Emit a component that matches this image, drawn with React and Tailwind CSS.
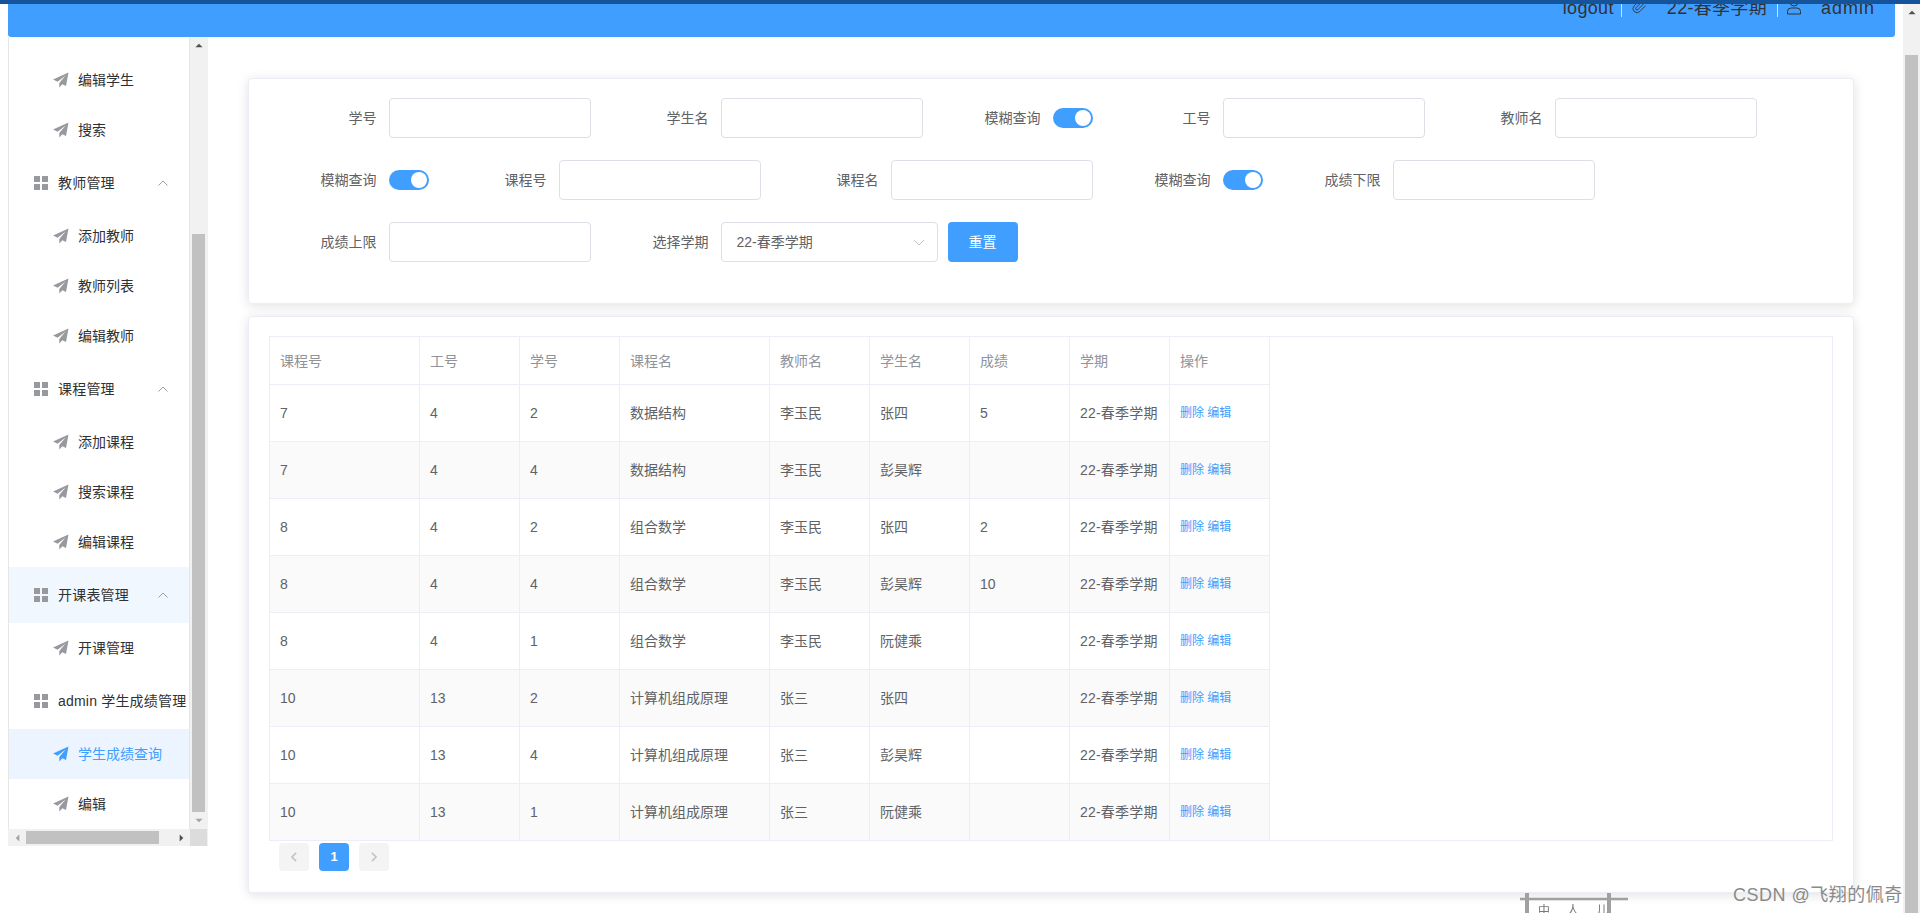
import { Paperclip } from 'lucide-react'

// Sidebar entries top to bottom; the menu is scrolled so it starts on 编辑学生.
const MENU = [
  { type: 'sub', label: '编辑学生' },
  { type: 'sub', label: '搜索' },
  { type: 'title', label: '教师管理', arrow: true },
  { type: 'sub', label: '添加教师' },
  { type: 'sub', label: '教师列表' },
  { type: 'sub', label: '编辑教师' },
  { type: 'title', label: '课程管理', arrow: true },
  { type: 'sub', label: '添加课程' },
  { type: 'sub', label: '搜索课程' },
  { type: 'sub', label: '编辑课程' },
  { type: 'title', label: '开课表管理', arrow: true, hover: true },
  { type: 'sub', label: '开课管理' },
  { type: 'title', label: 'admin 学生成绩管理' },
  { type: 'sub', label: '学生成绩查询', active: true },
  { type: 'sub', label: '编辑' },
]

const COLUMNS = ['课程号', '工号', '学号', '课程名', '教师名', '学生名', '成绩', '学期', '操作']

const ROWS = [
  ['7', '4', '2', '数据结构', '李玉民', '张四', '5'],
  ['7', '4', '4', '数据结构', '李玉民', '彭昊辉', ''],
  ['8', '4', '2', '组合数学', '李玉民', '张四', '2'],
  ['8', '4', '4', '组合数学', '李玉民', '彭昊辉', '10'],
  ['8', '4', '1', '组合数学', '李玉民', '阮健乘', ''],
  ['10', '13', '2', '计算机组成原理', '张三', '张四', ''],
  ['10', '13', '4', '计算机组成原理', '张三', '彭昊辉', ''],
  ['10', '13', '1', '计算机组成原理', '张三', '阮健乘', ''],
]

function PlaneIcon({ className }) {
  return (
    <svg viewBox="0 0 16 16" className={`h-4 w-4 shrink-0 ${className}`} fill="currentColor">
      <path d="M15.5.5 0 7.6l4.6 2.1 8-6.2-6.3 7.4v4.6l3.1-3.3 3.6 1.8z" />
    </svg>
  )
}

function GridIcon() {
  return (
    <svg viewBox="0 0 14 14" className="h-[14px] w-[14px] shrink-0 text-[#97999e]" fill="currentColor">
      <rect x="0" y="0" width="6" height="6" />
      <rect x="8" y="0" width="6" height="6" />
      <rect x="0" y="8" width="6" height="6" />
      <rect x="8" y="8" width="6" height="6" />
    </svg>
  )
}

function Arrow({ dir, className }) {
  const points = {
    up: '0,6 5,1 10,6',
    down: '0,1 5,6 10,1',
    left: '6,0 1,5 6,10',
    right: '1,0 6,5 1,10',
  }
  return (
    <svg viewBox={dir === 'up' || dir === 'down' ? '0 0 10 7' : '0 0 7 10'} className={className} fill="currentColor">
      <polygon points={points[dir]} />
    </svg>
  )
}

function Sidebar() {
  return (
    <aside className="flex h-[809px] w-[200px] shrink-0 flex-col">
      <div className="flex min-h-0 flex-1">
        <nav className="h-full w-[182px] overflow-hidden border-x border-[#e6e6e6] bg-white pt-[18px] text-sm text-[#303133]">
          {MENU.map((item) =>
            item.type === 'title' ? (
              <div
                key={item.label}
                className={`flex h-[56px] items-center gap-[10px] whitespace-nowrap pl-[25px] ${item.hover ? 'bg-[#f0f7ff]' : ''}`}
              >
                <GridIcon />
                <span className="tracking-[0.2px]">{item.label}</span>
                {item.arrow && (
                  <svg viewBox="0 0 10 6" className="ml-auto mr-[21px] h-[6px] w-[10px] text-[#909399]" fill="none" stroke="currentColor" strokeWidth="0.9">
                    <path d="M0.5 5.5 5 1l4.5 4.5" />
                  </svg>
                )}
              </div>
            ) : (
              <div
                key={item.label}
                className={`flex h-[50px] items-center gap-[9px] pl-[44px] ${item.active ? 'bg-[#ecf5ff] text-[#409eff]' : ''}`}
              >
                <PlaneIcon className={item.active ? 'text-[#409eff]' : 'text-[#97999e]'} />
                <span>{item.label}</span>
              </div>
            ),
          )}
        </nav>
        <div className="flex w-[18px] flex-col items-center bg-[#f1f1f1] pr-px">
          <div className="flex h-[17px] items-center justify-center">
            <Arrow dir="up" className="h-[5px] w-[8px] text-[#505050]" />
          </div>
          <div className="mt-[180px] h-[578px] w-[13px] bg-[#c1c1c1]" />
          <div className="flex h-[17px] items-center justify-center">
            <Arrow dir="down" className="h-[5px] w-[8px] text-[#a3a3a3]" />
          </div>
        </div>
      </div>
      <div className="flex h-[17px] bg-[#f1f1f1]">
        <div className="flex w-[182px] items-center pl-[1px]">
          <div className="flex w-[17px] justify-center">
            <Arrow dir="left" className="h-[8px] w-[5px] text-[#a3a3a3]" />
          </div>
          <div className="h-[13px] w-[133px] bg-[#c1c1c1]" />
          <div className="ml-[14px] flex w-[17px] justify-center">
            <Arrow dir="right" className="h-[8px] w-[5px] text-[#505050]" />
          </div>
        </div>
        <div className="w-[17px] bg-[#dcdcdc]" />
      </div>
    </aside>
  )
}

function Label({ children }) {
  return (
    <label className="w-[100px] shrink-0 whitespace-nowrap pr-3 text-right text-sm leading-10 text-[#606266]">
      {children}
    </label>
  )
}

function Field({ label }) {
  return (
    <div className="mr-[30px] flex">
      <Label>{label}</Label>
      <input className="h-10 w-[202px] rounded border border-[#dcdfe6] bg-white px-[15px] text-sm text-[#606266] outline-none" />
    </div>
  )
}

function Toggle({ label }) {
  return (
    <div className="mr-[30px] flex items-center">
      <Label>{label}</Label>
      <span className="flex h-5 w-10 justify-end rounded-[10px] bg-[#409eff] p-[2px]">
        <span className="h-4 w-4 rounded-full bg-white" />
      </span>
    </div>
  )
}

function SearchForm() {
  return (
    <section className="h-[226px] rounded border border-[#ebeef5] bg-white pl-[39.5px] pt-[19px] shadow-[0_2px_12px_0_rgba(0,0,0,0.12)]">
      <div className="flex">
        <Field label="学号" />
        <Field label="学生名" />
        <Toggle label="模糊查询" />
        <Field label="工号" />
        <Field label="教师名" />
      </div>
      <div className="mt-[22px] flex">
        <Toggle label="模糊查询" />
        <Field label="课程号" />
        <Field label="课程名" />
        <Toggle label="模糊查询" />
        <Field label="成绩下限" />
      </div>
      <div className="mt-[22px] flex">
        <Field label="成绩上限" />
        <div className="mr-[10px] flex">
          <Label>选择学期</Label>
          <div className="flex h-10 w-[217px] items-center justify-between rounded border border-[#dcdfe6] pl-[15px] pr-[12px] text-sm text-[#606266]">
            <span>22-春季学期</span>
            <svg viewBox="0 0 12 7" className="h-[7px] w-[12px] text-[#c0c4cc]" fill="none" stroke="currentColor">
              <path d="M1 1l5 5 5-5" />
            </svg>
          </div>
        </div>
        <button className="h-10 w-[70px] rounded bg-[#409eff] text-sm text-white">重置</button>
      </div>
    </section>
  )
}

function ResultTable() {
  return (
    <section className="mt-3 h-[577px] rounded border border-[#ebeef5] bg-white px-5 pt-[19px] shadow-[0_2px_12px_0_rgba(0,0,0,0.12)]">
      <table className="w-[1564px] table-fixed border-separate border-spacing-0 border-l border-t border-[#ebeef5] text-left text-sm">
        <colgroup>
          <col className="w-[150px]" />
          <col className="w-[100px]" />
          <col className="w-[100px]" />
          <col className="w-[150px]" />
          <col className="w-[100px]" />
          <col className="w-[100px]" />
          <col className="w-[100px]" />
          <col className="w-[100px]" />
          <col className="w-[100px]" />
          <col />
        </colgroup>
        <tbody>
          <tr className="h-[48px] text-[#909399]">
            {COLUMNS.map((c) => (
              <th key={c} className="border-b border-r border-[#ebeef5] pl-[10px] font-normal">{c}</th>
            ))}
            <th rowSpan={9} className="border-b border-r border-[#ebeef5]" />
          </tr>
          {ROWS.map((row, i) => (
            <tr key={i} className={`h-[57px] text-[#606266] ${i % 2 ? 'bg-[#fafafa]' : ''}`}>
              {row.map((v, j) => (
                <td key={j} className="whitespace-nowrap border-b border-r border-[#ebeef5] pl-[10px]">{v}</td>
              ))}
              <td className="border-b border-r border-[#ebeef5] pl-[10px] tracking-[0.2px]">22-春季学期</td>
              <td className="border-b border-r border-[#ebeef5] pl-[10px] text-xs text-[#409eff]">删除 编辑</td>
            </tr>
          ))}
        </tbody>
      </table>
      <div className="ml-[10px] mt-[2px] flex gap-[10px]">
        <button className="flex h-7 w-[30px] items-center justify-center rounded-sm bg-[#f4f4f5] text-[#c0c4cc]">
          <svg viewBox="0 0 7 12" className="h-[10px] w-[6px]" fill="none" stroke="currentColor" strokeWidth="2"><path d="M6 1 1 6l5 5" /></svg>
        </button>
        <button className="h-7 w-[30px] rounded-sm bg-[#409eff] text-[13px] font-bold text-white">1</button>
        <button className="flex h-7 w-[30px] items-center justify-center rounded-sm bg-[#f4f4f5] text-[#c0c4cc]">
          <svg viewBox="0 0 7 12" className="h-[10px] w-[6px]" fill="none" stroke="currentColor" strokeWidth="2"><path d="M1 1l5 5-5 5" /></svg>
        </button>
      </div>
    </section>
  )
}

export default function App() {
  return (
    <div className="relative flex h-[913px] flex-col overflow-hidden bg-white font-['Liberation_Sans','Noto_Sans_CJK_SC',sans-serif]">
      <div className="h-1 shrink-0 bg-[#15549a]" />
      <div className="flex min-h-0 flex-1">
        <div className="min-w-0 flex-1">
          <header className="mx-2 flex h-[33px] justify-end overflow-hidden rounded-b-[3px] bg-[#409eff] pr-5 text-[18px] leading-[26px] text-[#303133]">
            <div className="-mt-[9px] flex h-[26px]">
              <span className="tracking-[0.35px]">logout</span>
              <span className="ml-[7px] mt-[9px] h-[13px] w-px bg-[#dcdfe6]" />
              <Paperclip size={16} strokeWidth={1.3} className="ml-[9px] mt-[3px]" />
              <span className="ml-5 tracking-[0.3px]">22-春季学期</span>
              <span className="ml-[10px] mt-[9px] h-[13px] w-px bg-[#dcdfe6]" />
              <svg viewBox="0 0 14 17" className="ml-[9px] mt-[4px] h-[17px] w-[14px]" fill="none" stroke="currentColor">
                <circle cx="7" cy="3" r="4" />
                <path d="M.5 15v-2.5a3.5 3.5 0 0 1 3.5-3.5h6a3.5 3.5 0 0 1 3.5 3.5V15z" />
              </svg>
              <span className="ml-5 tracking-[1px]">admin</span>
            </div>
          </header>
          <div className="flex pl-2">
            <Sidebar />
            <main className="ml-10 mt-[41px] w-[1606px]">
              <SearchForm />
              <ResultTable />
            </main>
          </div>
        </div>
        <div className="flex w-[17px] shrink-0 flex-col items-center bg-[#f1f1f1]">
          <div className="flex h-[17px] items-center justify-center">
            <Arrow dir="up" className="h-[5px] w-[8px] text-[#505050]" />
          </div>
          <div className="mt-[34px] w-[13px] flex-1 bg-[#c1c1c1]" />
        </div>
      </div>

      {/* stamp picture peeking in under the table card */}
      <div className="absolute left-[1520px] top-[893px] h-5 w-[108px] blur-[0.7px]">
        <svg viewBox="0 0 108 20" className="absolute inset-0 h-5 w-[108px] text-[#a0a0a0]" fill="none" stroke="currentColor">
          <path d="M0 6 H108" strokeWidth="2.5" />
          <path d="M7 0 V20 M89 0 V20" strokeWidth="4" />
        </svg>
        <div className="absolute left-[18px] top-[10px] flex w-[70px] justify-between font-['Noto_Sans_CJK_SC',sans-serif] text-[12px] leading-[14px] text-[#777]">
          <span>中</span>
          <span>人</span>
          <span>儿</span>
        </div>
      </div>
      {/* csdn watermark */}
      <span className="absolute left-[1733px] top-[883px] whitespace-nowrap text-[18px] leading-[24px] tracking-[0.5px] text-[#8a8a8a]">
        CSDN @飞翔的佩奇
      </span>
    </div>
  )
}
